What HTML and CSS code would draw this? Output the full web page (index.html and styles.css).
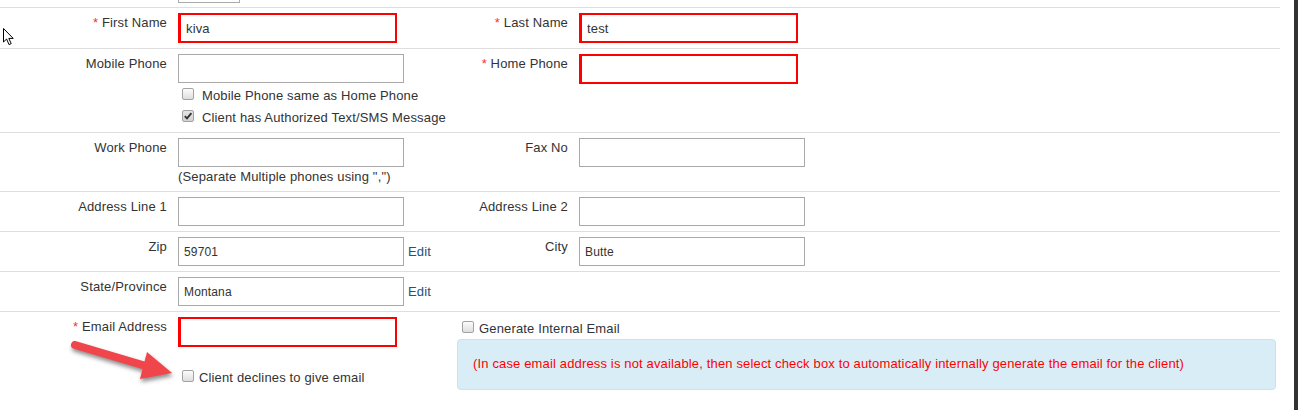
FILE: index.html
```html
<!DOCTYPE html>
<html>
<head>
<meta charset="utf-8">
<title>Client form</title>
<link rel="stylesheet" href="styles.css">
</head>
<body>
<div class="page">
  <div class="form">
    <div class="prev"><div class="stub"></div></div>

    <div class="row">
      <div class="lbl"><span class="req">*</span> First Name</div>
      <div class="fld"><input class="inp err" type="text" value="kiva"></div>
      <div class="lbl"><span class="req">*</span> Last Name</div>
      <div class="fld"><input class="inp err" type="text" value="test"></div>
    </div>

    <div class="row r2">
      <div class="lbl">Mobile Phone</div>
      <div class="fld">
        <input class="inp" type="text" value="">
        <div class="checks">
          <label class="chk"><span class="cb"></span>Mobile Phone same as Home Phone</label>
          <label class="chk"><span class="cb on"><svg viewBox="0 0 10 10" width="10" height="10"><path d="M1.8 5.2 L4 7.4 L8.4 2.2" fill="none" stroke="#333" stroke-width="1.9"/></svg></span>Client has Authorized Text/SMS Message</label>
        </div>
      </div>
      <div class="lbl"><span class="req">*</span> Home Phone</div>
      <div class="fld"><input class="inp err" type="text" value=""></div>
    </div>

    <div class="row">
      <div class="lbl">Work Phone</div>
      <div class="fld">
        <input class="inp" type="text" value="">
        <div class="help">(Separate Multiple phones using ",")</div>
      </div>
      <div class="lbl">Fax No</div>
      <div class="fld"><input class="inp" type="text" value=""></div>
    </div>

    <div class="row">
      <div class="lbl">Address Line 1</div>
      <div class="fld"><input class="inp" type="text" value=""></div>
      <div class="lbl">Address Line 2</div>
      <div class="fld"><input class="inp" type="text" value=""></div>
    </div>

    <div class="row">
      <div class="lbl">Zip</div>
      <div class="fld"><div class="line"><input class="inp sm" type="text" value="59701"><a class="edit" href="#">Edit</a></div></div>
      <div class="lbl">City</div>
      <div class="fld"><input class="inp sm" type="text" value="Butte"></div>
    </div>

    <div class="row">
      <div class="lbl">State/Province</div>
      <div class="fld"><div class="line"><input class="inp sm" type="text" value="Montana"><a class="edit" href="#">Edit</a></div></div>
      <div class="lbl"></div>
      <div class="fld"></div>
    </div>

    <div class="row email">
      <div class="lbl"><span class="req">*</span> Email Address</div>
      <div class="fld">
        <input class="inp err" type="text" value="">
        <label class="chk declines"><span class="cb"></span>Client declines to give email</label>
      </div>
      <div class="gen">
        <label class="chk genline"><span class="cb"></span>Generate Internal Email</label>
        <div class="alert">(In case email address is not available, then select check box to automatically internally generate the email for the client)</div>
      </div>
    </div>
  </div>
  <div class="edge"></div>

  <svg class="cursor" width="12" height="18" viewBox="0 0 12 18">
    <path d="M0.5 0.5 L0.5 14 L3.6 11 L6 16.6 L8.2 15.6 L5.8 10.4 L10.2 10.4 Z" fill="#fff" stroke="#000" stroke-width="1" stroke-linejoin="miter"/>
  </svg>

  <svg class="arrow" width="130" height="60" viewBox="0 0 130 60">
    <line x1="15" y1="15" x2="86" y2="36" stroke="#f0454a" stroke-width="8" stroke-linecap="round"/>
    <polygon points="87,22 112,43 80,49" fill="#f0454a"/>
  </svg>
</div>
</body>
</html>
```

FILE: styles.css
```css
* { box-sizing: border-box; }
html, body { margin: 0; background: #fff; }
body {
  font-family: "Liberation Sans", Arial, sans-serif;
  font-size: 13px;
  letter-spacing: 0.15px;
  color: #333;
}
.page {
  position: relative;
  display: flex;
  height: 410px;
  overflow: hidden;
}
.form { width: 1280px; flex: none; }
.edge { margin-left: auto; width: 4px; background: #333; }

.prev { padding: 0 0 4px 178px; }
.stub { width: 62px; height: 3px; border: 1px solid #aaa; border-top: 0; }

.row {
  display: grid;
  grid-template-columns: 178px 262px 139px 1fr;
  align-items: start;
  border-top: 1px solid #dedede;
  padding: 5px 0;
}
.row.r2 { padding-bottom: 3px; }
.row.email { grid-template-columns: 178px 262px 1fr; height: 99px; }

.lbl { text-align: right; padding-right: 11px; line-height: 20px; }
.req { color: #f2333a; }

.fld { display: flex; flex-direction: column; align-items: flex-start; }
.line { display: flex; align-items: center; }

.inp {
  width: 226px;
  height: 29px;
  margin: 0;
  padding: 0 5px;
  border: 1px solid #a9a9a9;
  border-radius: 0;
  background: #fff;
  font: inherit;
  letter-spacing: 0.15px;
  color: #333;
  outline: none;
}
.inp.sm { font-size: 12px; }
.inp.err {
  width: 219px;
  height: 30px;
  border: 2px solid #f00;
  border-left-width: 3px;
}

.edit { margin-left: 4px; color: #23527c; text-decoration: none; }
.help { line-height: 19px; }

.checks { margin-top: 2px; }
.chk { display: block; line-height: 22px; white-space: nowrap; }
.cb {
  position: relative;
  display: inline-block;
  width: 12px;
  height: 12px;
  margin: 0 8px 0 4px;
  vertical-align: baseline;
  border: 1px solid #a2a2a2;
  border-radius: 2px;
  background: linear-gradient(#fcfcfc, #dedede);
}
.cb.on { background: linear-gradient(#e4e4e4, #d2d2d2); }
.cb svg { position: absolute; left: 0; top: 0; }

.declines { margin-top: 20px; }
.declines .cb { margin-right: 5px; }

.gen { padding: 2px 4px 0 17px; }
.genline { line-height: 20px; }
.genline .cb { margin: 0 5px 0 5px; }

.alert {
  padding: 15px;
  line-height: 1.42857;
  border: 1px solid #bce8f1;
  border-radius: 4px;
  background: #d9edf7;
  color: #f00;
}

.cursor { position: absolute; left: 3px; top: 28px; }
.arrow {
  position: absolute;
  left: 60px;
  top: 330px;
  filter: drop-shadow(1px 3px 2px rgba(0, 0, 0, 0.45));
}
```
